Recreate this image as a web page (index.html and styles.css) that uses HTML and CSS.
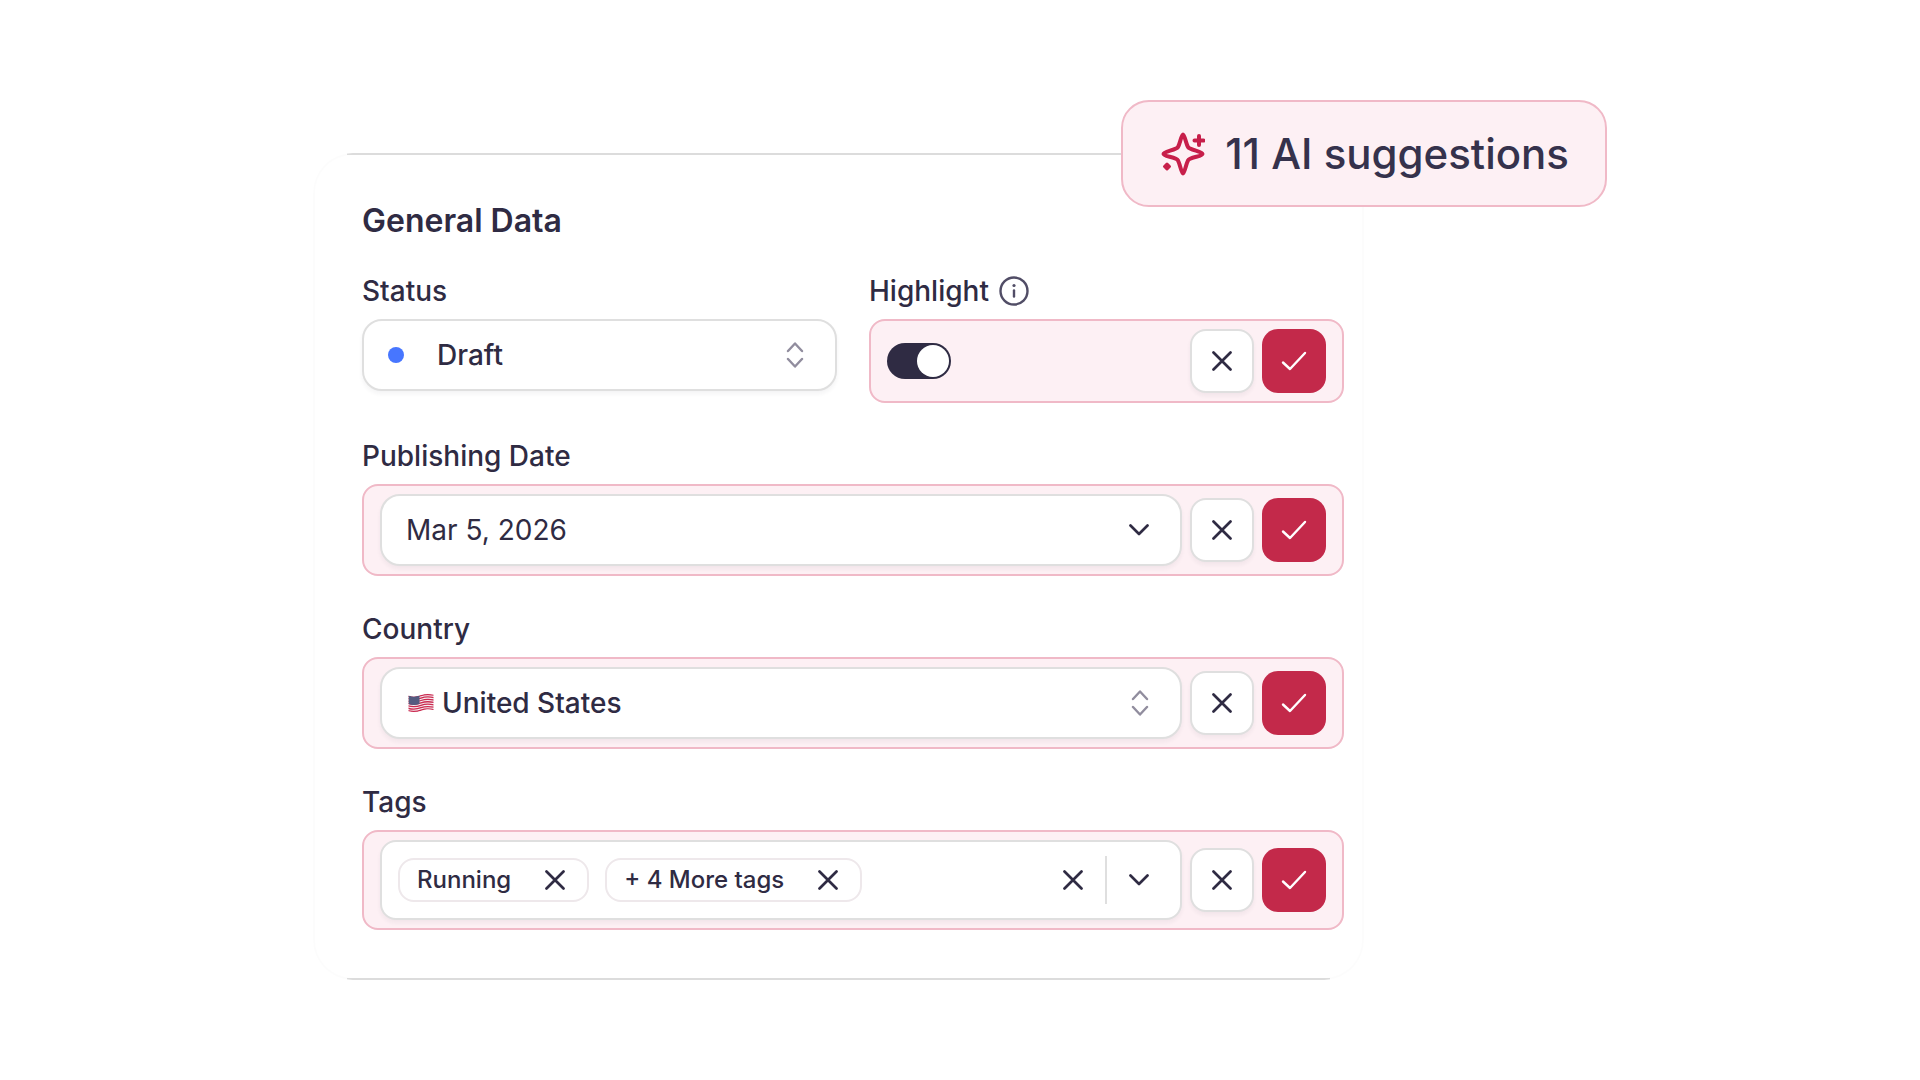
FILE: index.html
```html
<!DOCTYPE html>
<html lang="en">
<head>
<meta charset="utf-8">
<meta name="viewport" content="width=device-width, initial-scale=1">
<title>General Data</title>
<link rel="stylesheet" href="styles.css">
</head>
<body>
<svg class="sprite" aria-hidden="true">
  <symbol id="i-x" viewBox="0 0 20 20"><path d="M1.500 1.500l17 17M18.500 1.500l-17 17"/></symbol>
  <symbol id="i-check" viewBox="0 0 26 20"><path d="M2 11.500l7 6.500L24 2"/></symbol>
  <symbol id="i-down" viewBox="0 0 20 12"><path d="M1.500 1.500L10 10l8.500-8.500"/></symbol>
  <symbol id="i-updown" viewBox="0 0 18 26"><path d="M2 9l7-7.500L16 9M2 17l7 7.500 7-7.500"/></symbol>
</svg>
<main class="stage">
  <form class="card">
    <h1 class="title">General Data</h1>
    <div class="fields">
      <div class="columns">
        <div class="field">
          <label class="label" for="status">Status</label>
          <div class="control">
            <span class="dot"></span>
            <select class="value value-status" id="status"><option>Draft</option></select>
            <svg class="icon icon-updown"><use href="#i-updown"/></svg>
          </div>
        </div>
        <div class="field">
          <div class="label">
            <label for="highlight">Highlight</label>
            <svg class="icon icon-info" viewBox="0 0 30 30"><circle cx="15" cy="15" r="13.500"/><path d="M15 14.500v6"/><circle class="info-dot" cx="15" cy="9.500" r="1.600"/></svg>
          </div>
          <div class="suggestion">
            <input class="switch" type="checkbox" role="switch" id="highlight" checked>
            <div class="actions">
              <button class="action reject" type="button" aria-label="Reject"><svg class="icon icon-x"><use href="#i-x"/></svg></button>
              <button class="action accept" type="button" aria-label="Accept"><svg class="icon icon-check"><use href="#i-check"/></svg></button>
            </div>
          </div>
        </div>
      </div>
      <div class="field">
        <label class="label" for="date">Publishing Date</label>
        <div class="suggestion">
          <div class="control">
            <input class="value value-date" id="date" type="text" value="Mar 5, 2026">
            <svg class="icon icon-down"><use href="#i-down"/></svg>
          </div>
          <div class="actions">
            <button class="action reject" type="button" aria-label="Reject"><svg class="icon icon-x"><use href="#i-x"/></svg></button>
            <button class="action accept" type="button" aria-label="Accept"><svg class="icon icon-check"><use href="#i-check"/></svg></button>
          </div>
        </div>
      </div>
      <div class="field">
        <label class="label" for="country">Country</label>
        <div class="suggestion">
          <div class="control">
            <svg class="flag" viewBox="0 0 26 20">
              <defs><clipPath id="wave"><path d="M.5 2.500C5 4 9 3.500 13 2S21 .5 25.500 1.500V17C21 16 17 16.500 13 18S5 19.500.5 18.500Z"/></clipPath></defs>
              <g clip-path="url(#wave)">
                <rect width="26" height="20" fill="#f6eef1"/>
                <g fill="none" stroke="#cb2a50" stroke-width="1.300">
                  <path d="M0 3.200C5 4.700 9 4.200 13 2.700S21 1.200 26 2.200"/>
                  <path d="M0 5.600C5 7.100 9 6.600 13 5.100S21 3.600 26 4.600"/>
                  <path d="M0 8C5 9.500 9 9 13 7.500S21 6 26 7"/>
                  <path d="M0 10.400C5 11.900 9 11.400 13 9.900S21 8.400 26 9.400"/>
                  <path d="M0 12.800C5 14.300 9 13.800 13 12.300S21 10.800 26 11.800"/>
                  <path d="M0 15.200C5 16.700 9 16.200 13 14.700S21 13.200 26 14.200"/>
                  <path d="M0 17.600C5 19.100 9 18.600 13 17.100S21 15.600 26 16.600"/>
                </g>
                <path fill="#535b80" d="M.5 2.500C4 3.700 8 3.700 11.500 2.500V11C8 12.200 4 12.200.5 11Z"/>
              </g>
            </svg>
            <select class="value" id="country"><option>United States</option></select>
            <svg class="icon icon-updown"><use href="#i-updown"/></svg>
          </div>
          <div class="actions">
            <button class="action reject" type="button" aria-label="Reject"><svg class="icon icon-x"><use href="#i-x"/></svg></button>
            <button class="action accept" type="button" aria-label="Accept"><svg class="icon icon-check"><use href="#i-check"/></svg></button>
          </div>
        </div>
      </div>
      <div class="field">
        <div class="label" id="tags-label">Tags</div>
        <div class="suggestion">
          <div class="control control-tags" role="group" aria-labelledby="tags-label">
            <span class="chip">Running <button class="bare" type="button" aria-label="Remove Running"><svg class="icon icon-x"><use href="#i-x"/></svg></button></span>
            <span class="chip">+ 4 More tags <button class="bare" type="button" aria-label="Remove 4 more tags"><svg class="icon icon-x"><use href="#i-x"/></svg></button></span>
            <div class="tag-tools">
              <button class="bare" type="button" aria-label="Clear tags"><svg class="icon icon-x"><use href="#i-x"/></svg></button>
              <span class="divider"></span>
              <button class="bare" type="button" aria-label="Show tags"><svg class="icon icon-down"><use href="#i-down"/></svg></button>
            </div>
          </div>
          <div class="actions">
            <button class="action reject" type="button" aria-label="Reject"><svg class="icon icon-x"><use href="#i-x"/></svg></button>
            <button class="action accept" type="button" aria-label="Accept"><svg class="icon icon-check"><use href="#i-check"/></svg></button>
          </div>
        </div>
      </div>
    </div>
  </form>
  <aside class="badge">
    <svg class="icon icon-sparkle" viewBox="0 0 44 44">
      <path d="M22 2.500C23.500 2.500 25 11.500 27 15C28.500 18 41.500 19.500 41.500 22S28.500 25 27 28.500C25 32 23.500 41.500 22 41.500S19 32 17 28.500C15.500 25 2.500 24.500 2.500 22S15.500 18 17 15C19 11.500 20.500 2.500 22 2.500Z"/>
      <path d="M38 4v9M33.500 8.500h9"/>
      <path class="spark-dot" d="M6 32l2.500 2.500L6 37 3.500 34.500Z"/>
    </svg>
    <span>11 AI suggestions</span>
  </aside>
</main>
</body>
</html>
```
FILE: styles.css
```css
:root {
  --ink: #2f2b43;
  --line: #dfdfdf;
  --rose: #c3294a;
  --rose-line: #f0b9c7;
  --rose-bg: #fdf0f4;
}

* { box-sizing: border-box; }

body {
  margin: 0;
  min-height: 100vh;
  display: flex;
  align-items: center;
  justify-content: center;
  background: #fff;
  color: var(--ink);
  font: 500 28px/36px Inter, "Liberation Sans", sans-serif;
}

button, input, select {
  margin: 0;
  padding: 0;
  border: 0;
  background: none;
  color: inherit;
  font: inherit;
}

.sprite { position: absolute; width: 0; height: 0; }

.stage {
  position: relative;
  width: 100%;
  max-width: 1294px;
  padding: 53px 243px 0 0;
}

/* The top and bottom rules stop where the rounded corners begin. */
.card {
  padding: 46px 18px 48px 47px;
  border: 2px solid rgba(0, 0, 0, 0.01);
  border-radius: 40px;
  background:
    linear-gradient(var(--line), var(--line)) top / calc(100% - 68px) 2px no-repeat border-box,
    linear-gradient(var(--line), var(--line)) bottom / calc(100% - 68px) 2px no-repeat border-box;
}

.title {
  margin: 0 0 32px;
  font-size: 32px;
  line-height: 40px;
  font-weight: 600;
}

.fields { display: flex; flex-direction: column; gap: 35px; }

.columns {
  display: grid;
  grid-template-columns: 1fr 1fr;
  gap: 32px;
}

.label {
  display: flex;
  align-items: center;
  gap: 10px;
  margin-bottom: 10px;
}

.control {
  flex: 1;
  min-width: 0;
  height: 72px;
  display: flex;
  align-items: center;
  padding: 0 31px 0 24px;
  border: 2px solid var(--line);
  border-radius: 20px;
  background: #fff;
  box-shadow: 0 3px 4px rgba(47, 43, 67, 0.05);
}

.value {
  flex: 1;
  min-width: 0;
  height: 36px;
  appearance: none;
  outline: 0;
}

.value-date { font-weight: 400; }

.value-status { margin-left: 33px; }

.dot {
  width: 16px;
  height: 16px;
  border-radius: 50%;
  background: #4776ff;
}

.flag { width: 26px; height: 20px; margin: 0 8px 0 2px; }

.suggestion {
  display: flex;
  align-items: center;
  gap: 8px;
  padding: 8px 16px;
  border: 2px solid var(--rose-line);
  border-radius: 16px;
  background: var(--rose-bg);
}

.actions { display: flex; gap: 8px; margin-left: auto; }

.action {
  width: 64px;
  height: 64px;
  display: flex;
  align-items: center;
  justify-content: center;
  border-radius: 16px;
}

.reject {
  border: 2px solid var(--line);
  background: #fff;
  box-shadow: 0 3px 4px rgba(47, 43, 67, 0.05);
}

.accept { background: var(--rose); color: #fff; }

.switch {
  appearance: none;
  width: 64px;
  height: 36px;
  display: flex;
  justify-content: flex-end;
  padding: 2px;
  border-radius: 18px;
  background: var(--ink);
}

.switch::before {
  content: "";
  width: 32px;
  height: 32px;
  border-radius: 50%;
  background: #fff;
}

.control-tags {
  height: 80px;
  gap: 16px;
  padding-left: 16px;
  border-radius: 16px;
}

.chip {
  height: 44px;
  display: flex;
  align-items: center;
  gap: 34px;
  padding: 0 22px 0 17px;
  border: 2px solid #eee8eb;
  border-radius: 16px;
  font-size: 24px;
  white-space: nowrap;
}

.bare { display: flex; }

.tag-tools {
  display: flex;
  align-items: center;
  gap: 22px;
  margin-left: auto;
}

.divider { width: 2px; height: 48px; background: var(--line); }

.icon {
  flex: none;
  fill: none;
  stroke: currentColor;
  stroke-width: 2.7;
  stroke-linecap: round;
  stroke-linejoin: round;
}

.icon-x { width: 20px; height: 20px; }
.icon-check { width: 26px; height: 20px; stroke-width: 2.4; }
.icon-down { width: 20px; height: 12px; }
.icon-updown { width: 18px; height: 26px; color: #918d9e; stroke-width: 2.4; }
.icon-info { width: 30px; height: 30px; color: #514d66; stroke-width: 2.4; }
.info-dot { fill: currentColor; stroke: none; }

.badge {
  position: absolute;
  top: 0;
  right: 0;
  height: 107px;
  display: flex;
  align-items: center;
  gap: 20px;
  padding: 0 36px 0 38px;
  border: 2px solid var(--rose-line);
  border-radius: 28px;
  background: var(--rose-bg);
  color: #35324c;
  font-size: 42px;
  line-height: 52px;
  white-space: nowrap;
}

.icon-sparkle {
  width: 44px;
  height: 44px;
  color: #c71f4a;
  stroke-width: 4;
}

.spark-dot { fill: currentColor; stroke-width: 3; }
```
